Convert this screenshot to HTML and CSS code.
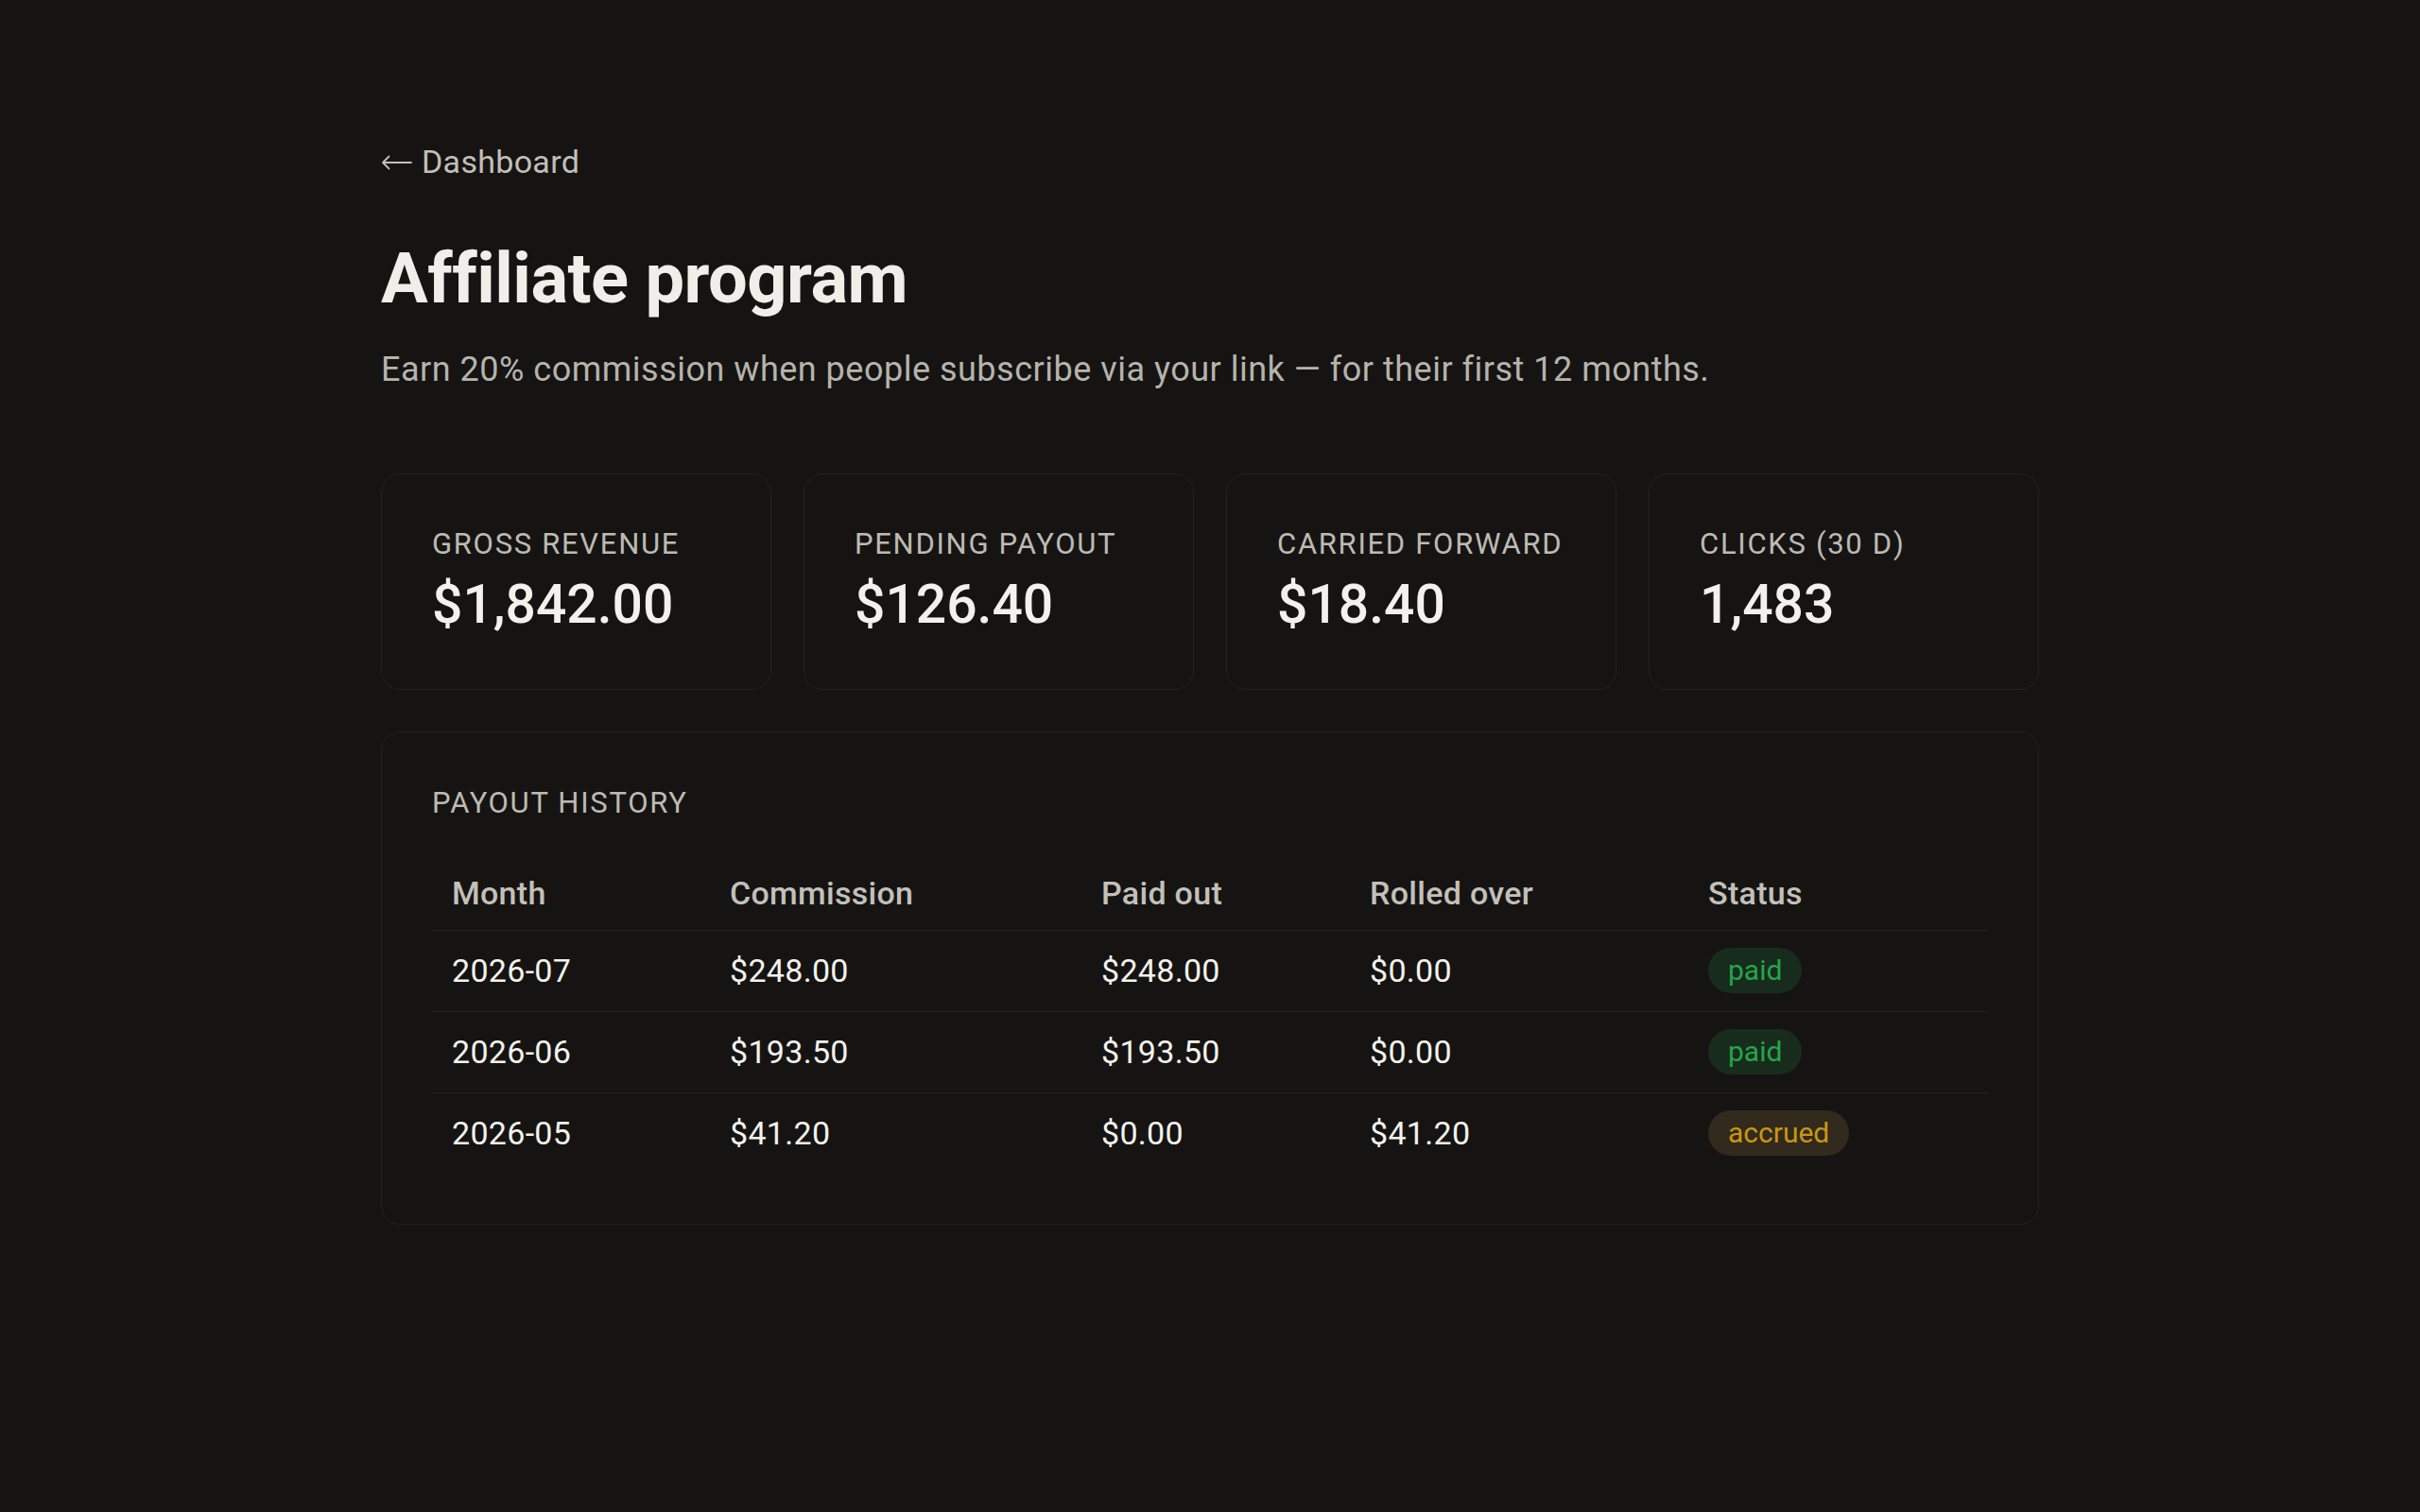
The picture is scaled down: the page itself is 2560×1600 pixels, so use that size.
FILE: index.html
```html
<!DOCTYPE html>
<html lang="en">
<head>
<meta charset="utf-8">
<title>Affiliate program</title>
<link rel="stylesheet" href="styles.css">
</head>
<body>
<main class="page">
  <a class="back" href="#"><svg class="arrow" width="33" height="16" viewBox="0 0 33 16" aria-hidden="true"><path d="M32 8H2M8.5 1.5L2 8l6.5 6.5" fill="none" stroke="currentColor" stroke-width="1.8" stroke-linecap="round" stroke-linejoin="round"/></svg>Dashboard</a>
  <h1 class="title">Affiliate program</h1>
  <p class="subtitle">Earn 20% commission when people subscribe via your link — for their first 12 months.</p>

  <section class="stats">
    <div class="card stat">
      <div class="label">GROSS REVENUE</div>
      <div class="value">$1,842.00</div>
    </div>
    <div class="card stat">
      <div class="label">PENDING PAYOUT</div>
      <div class="value">$126.40</div>
    </div>
    <div class="card stat">
      <div class="label">CARRIED FORWARD</div>
      <div class="value">$18.40</div>
    </div>
    <div class="card stat">
      <div class="label">CLICKS (30 D)</div>
      <div class="value">1,483</div>
    </div>
  </section>

  <section class="card history">
    <div class="label">PAYOUT HISTORY</div>
    <table class="table">
      <colgroup>
        <col class="c-month">
        <col class="c-comm">
        <col class="c-paid">
        <col class="c-roll">
        <col class="c-status">
      </colgroup>
      <thead>
        <tr>
          <th>Month</th>
          <th>Commission</th>
          <th>Paid out</th>
          <th>Rolled over</th>
          <th>Status</th>
        </tr>
      </thead>
      <tbody>
        <tr>
          <td>2026-07</td>
          <td>$248.00</td>
          <td>$248.00</td>
          <td>$0.00</td>
          <td class="status"><span class="badge badge-paid">paid</span></td>
        </tr>
        <tr>
          <td>2026-06</td>
          <td>$193.50</td>
          <td>$193.50</td>
          <td>$0.00</td>
          <td class="status"><span class="badge badge-paid">paid</span></td>
        </tr>
        <tr>
          <td>2026-05</td>
          <td>$41.20</td>
          <td>$0.00</td>
          <td>$41.20</td>
          <td class="status"><span class="badge badge-accrued">accrued</span></td>
        </tr>
      </tbody>
    </table>
  </section>
</main>
</body>
</html>
```

FILE: styles.css
```css
* {
  box-sizing: border-box;
}

html, body {
  margin: 0;
  padding: 0;
  background: #151412;
}

body {
  font-family: Roboto, "Liberation Sans", sans-serif;
  color: #efeee9;
  min-height: 1600px;
}

.page {
  width: 1754px;
  margin: 0 auto;
  padding-top: 151px;
  display: flex;
  flex-direction: column;
  align-items: flex-start;
}

.back {
  display: flex;
  align-items: center;
  font-size: 34px;
  line-height: 40px;
  letter-spacing: 0.3px;
  color: #c2bfb8;
  text-decoration: none;
}

.arrow {
  display: block;
  margin-right: 10px;
  margin-top: 2px;
}

.title {
  margin: 60px 0 0;
  font-size: 74px;
  line-height: 88px;
  font-weight: 700;
  letter-spacing: -0.5px;
  color: #efeee9;
}

.subtitle {
  margin: 30px 0 0;
  font-size: 36px;
  line-height: 44px;
  letter-spacing: 0.5px;
  color: #b6b3ac;
}

.stats {
  margin-top: 88px;
  width: 100%;
  display: grid;
  grid-template-columns: repeat(4, 1fr);
  gap: 34px;
}

.card {
  border: 1px solid #232220;
  border-radius: 20px;
  background: #151412;
}

.stat {
  padding: 56px 53px 54px;
}

.label {
  font-size: 31px;
  line-height: 36px;
  color: #bdbab3;
  letter-spacing: 1.7px;
}

.value {
  margin-top: 11px;
  font-size: 57px;
  line-height: 70px;
  font-weight: 500;
  color: #f2f1ec;
}

.history {
  margin-top: 44px;
  width: 100%;
  padding: 57px 53px 53px;
}

.table {
  margin-top: 38px;
  width: 100%;
  border-collapse: collapse;
  table-layout: fixed;
}

.c-month { width: 294px; }
.c-comm { width: 393px; }
.c-paid { width: 284px; }
.c-roll { width: 358px; }
.c-status { width: auto; }

.table th {
  text-align: left;
  font-size: 34px;
  line-height: 40px;
  font-weight: 500;
  letter-spacing: 0.3px;
  color: #c3c0b9;
  padding: 19px 21px;
  border-bottom: 1px solid #232220;
}

.table td {
  font-size: 34px;
  line-height: 40px;
  letter-spacing: 0.3px;
  color: #f3f2ed;
  padding: 22px 21px 23px;
  vertical-align: middle;
}

.table td.status {
  line-height: 48px;
  padding: 18px 21px 19px;
}

.table tbody tr + tr td {
  border-top: 1px solid #232220;
}

.badge {
  display: inline-block;
  vertical-align: top;
  height: 48px;
  line-height: 48px;
  padding: 0 21px;
  border-radius: 24px;
  font-size: 30px;
  letter-spacing: 0;
}

.badge-paid {
  background: #182c1e;
  color: #23a648;
}

.badge-accrued {
  background: #322a1c;
  color: #c99712;
}
```
